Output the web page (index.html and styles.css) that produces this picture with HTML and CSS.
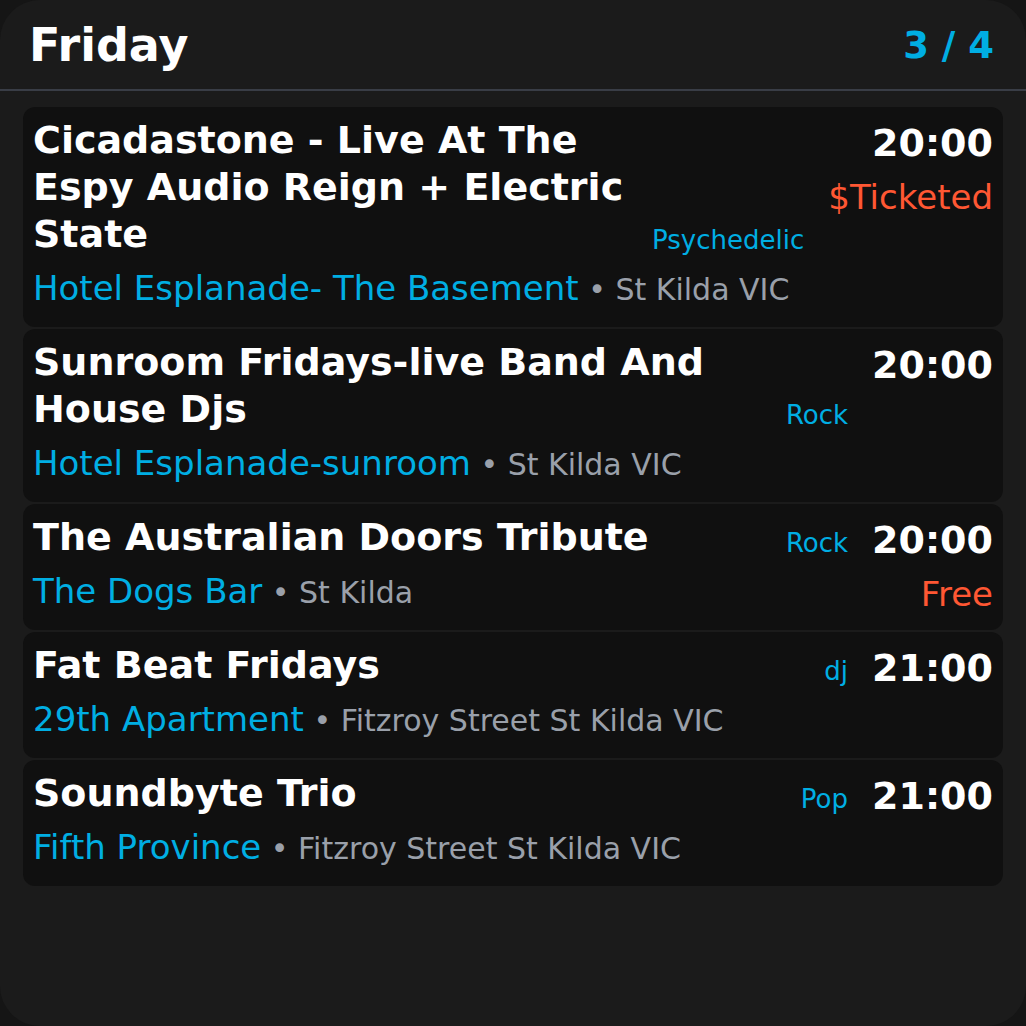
FILE: index.html
```html
<!DOCTYPE html>
<html lang="en">
<head>
<meta charset="utf-8">
<title>Friday</title>
<link rel="stylesheet" href="styles.css">
</head>
<body>
<div class="screen">
  <header class="header">
    <h1 class="day">Friday</h1>
    <div class="pager">3 / 4</div>
  </header>
  <main class="list">
    <article class="card">
      <div class="main">
        <div class="title-row">
          <h2 class="title">Cicadastone - Live At The Espy Audio Reign + Electric State</h2>
          <span class="genre">Psychedelic</span>
        </div>
        <div class="venue"><span class="venue-name">Hotel Esplanade- The Basement</span><span class="loc"> • St Kilda VIC</span></div>
      </div>
      <div class="side">
        <div class="time">20:00</div>
        <div class="price">$Ticketed</div>
      </div>
    </article>
    <article class="card">
      <div class="main">
        <div class="title-row">
          <h2 class="title">Sunroom Fridays-live Band And House Djs</h2>
          <span class="genre">Rock</span>
        </div>
        <div class="venue"><span class="venue-name">Hotel Esplanade-sunroom</span><span class="loc"> • St Kilda VIC</span></div>
      </div>
      <div class="side">
        <div class="time">20:00</div>
      </div>
    </article>
    <article class="card">
      <div class="main">
        <div class="title-row">
          <h2 class="title">The Australian Doors Tribute</h2>
          <span class="genre">Rock</span>
        </div>
        <div class="venue"><span class="venue-name">The Dogs Bar</span><span class="loc"> • St Kilda</span></div>
      </div>
      <div class="side">
        <div class="time">20:00</div>
        <div class="price">Free</div>
      </div>
    </article>
    <article class="card">
      <div class="main">
        <div class="title-row">
          <h2 class="title">Fat Beat Fridays</h2>
          <span class="genre">dj</span>
        </div>
        <div class="venue"><span class="venue-name">29th Apartment</span><span class="loc"> • Fitzroy Street St Kilda VIC</span></div>
      </div>
      <div class="side">
        <div class="time">21:00</div>
      </div>
    </article>
    <article class="card">
      <div class="main">
        <div class="title-row">
          <h2 class="title">Soundbyte Trio</h2>
          <span class="genre">Pop</span>
        </div>
        <div class="venue"><span class="venue-name">Fifth Province</span><span class="loc"> • Fitzroy Street St Kilda VIC</span></div>
      </div>
      <div class="side">
        <div class="time">21:00</div>
      </div>
    </article>
  </main>
</div>
</body>
</html>
```

FILE: styles.css
```css
* { box-sizing: border-box; }
html, body {
  margin: 0;
  padding: 0;
  background: #151515;
}
body {
  width: 1026px;
  height: 1026px;
  font-family: "DejaVu Sans", "Liberation Sans", sans-serif;
  color: #ffffff;
}
.screen {
  width: 1026px;
  height: 1026px;
  background: #1b1b1b;
  border-radius: 40px;
  overflow: hidden;
}
.header {
  height: 91px;
  display: flex;
  align-items: center;
  justify-content: space-between;
  padding: 1px 32px 0 29px;
  border-bottom: 2px solid #393d46;
}
.day {
  margin: 0;
  font-size: 46px;
  font-weight: bold;
  line-height: 52px;
  color: #ffffff;
}
.pager {
  font-size: 37px;
  font-weight: bold;
  color: #00aee3;
}
.list {
  padding: 16px 23px 0;
  display: flex;
  flex-direction: column;
  gap: 2px;
}
.card {
  background: #101010;
  border-radius: 12px;
  padding: 10px 10px 15px 10px;
  display: flex;
  gap: 24px;
}
.main {
  flex: 1 1 0;
  min-width: 0;
}
.title-row {
  display: flex;
  gap: 12px;
}
.title {
  flex: 1 1 0;
  min-width: 0;
  margin: 0;
  font-size: 38px;
  line-height: 47px;
  font-weight: bold;
  color: #ffffff;
}
.genre {
  flex: none;
  align-self: flex-end;
  font-size: 26px;
  line-height: 36px;
  color: #00aee3;
}
.venue {
  margin-top: 6px;
  font-size: 34px;
  line-height: 48px;
  white-space: nowrap;
}
.venue-name {
  color: #00aee3;
}
.loc {
  font-size: 30px;
  line-height: 1;
  color: #9aa0aa;
}
.side {
  flex: none;
  display: flex;
  flex-direction: column;
  align-items: flex-end;
}
.time {
  font-size: 38px;
  line-height: 52px;
  font-weight: bold;
  color: #ffffff;
}
.price {
  margin-top: 8px;
  font-size: 34px;
  line-height: 40px;
  color: #ff5733;
}
```
